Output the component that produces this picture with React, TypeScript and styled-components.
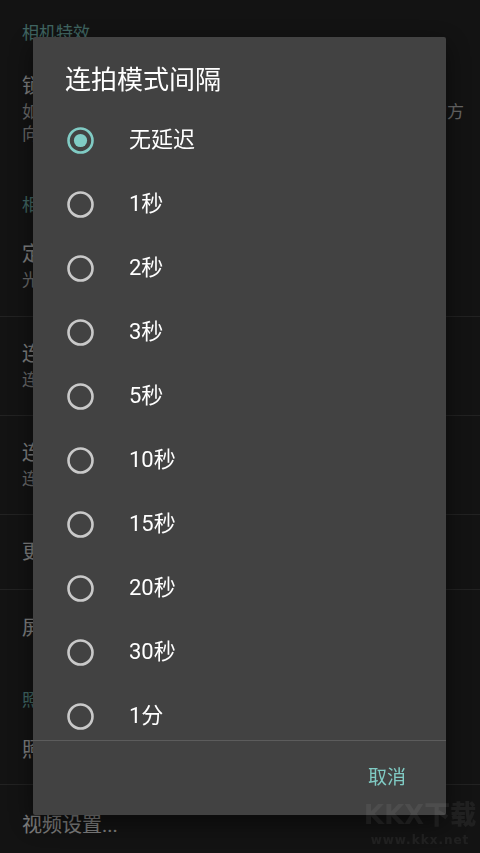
import styled, { createGlobalStyle } from "styled-components";

const GlobalStyle = createGlobalStyle`
  html, body {
    margin: 0;
    padding: 0;
    background: #262626;
  }
  body {
    font-family: Roboto, "Noto Sans CJK SC", sans-serif;
  }
`;

const Page = styled.div`
  position: relative;
  width: 480px;
  height: 853px;
  overflow: hidden;
  background: #262626;
`;

const Category = styled.div<{ $h: number; $top: number }>`
  height: ${(p) => p.$h}px;
  padding: ${(p) => p.$top}px 22px 0;
  box-sizing: border-box;
  font-size: 17px;
  line-height: 22px;
  color: #80cbc4;
`;

const Pref = styled.div<{ $h: number; $divider?: boolean }>`
  height: ${(p) => p.$h}px;
  padding: 0 22px;
  display: flex;
  flex-direction: column;
  justify-content: center;
  border-bottom: ${(p) => (p.$divider ? "1px solid #444444" : "none")};
  box-sizing: content-box;
`;

const PrefTitle = styled.div`
  font-size: 20px;
  line-height: 26px;
  color: #ffffff;
  white-space: nowrap;
`;

const PrefSummary = styled.div<{ $first?: boolean }>`
  margin-top: ${(p) => (p.$first ? 2 : 0)}px;
  font-size: 17px;
  line-height: 22px;
  color: #d0d0d0;
  white-space: nowrap;
`;

const Scrim = styled.div`
  position: fixed;
  inset: 0;
  background: rgba(0, 0, 0, 0.5);
`;

const Dialog = styled.div`
  position: fixed;
  left: 33px;
  top: 37px;
  width: 413px;
  height: 778px;
  background: #424242;
  border-radius: 2px;
  box-shadow: 0 8px 24px rgba(0, 0, 0, 0.5);
  display: flex;
  flex-direction: column;
  overflow: hidden;
`;

const DialogTitle = styled.div`
  height: 71px;
  box-sizing: border-box;
  padding: 25px 32px 0;
  font-size: 26px;
  line-height: 36px;
  color: #ffffff;
`;

const OptionList = styled.div`
  height: 632px;
  overflow: hidden;
`;

const Option = styled.div`
  height: 64px;
  display: flex;
  align-items: center;
  padding-left: 34px;
  gap: 35px;
`;

const OptionLabel = styled.span`
  font-size: 22px;
  line-height: 30px;
  margin-bottom: 1px;
  color: #ffffff;
`;

const Footer = styled.div`
  flex: 1;
  border-top: 1px solid #5c5c5c;
  display: flex;
  justify-content: flex-end;
  align-items: center;
  padding-right: 24px;
`;

const TextButton = styled.button`
  background: none;
  border: none;
  padding: 8px 16px;
  font-family: Roboto, "Noto Sans CJK SC", sans-serif;
  font-size: 19px;
  line-height: 24px;
  color: #80cbc4;
`;

const Watermark = styled.div`
  position: fixed;
  left: 363px;
  top: 798px;
  width: 114px;
  display: flex;
  flex-direction: column;
  align-items: center;
  color: rgba(255, 255, 255, 0.06);
  font-family: "DejaVu Sans", "Noto Sans CJK SC", sans-serif;
  font-weight: bold;
  pointer-events: none;
`;

const WatermarkLogo = styled.div`
  font-size: 26px;
  line-height: 34px;
  font-weight: 900;
`;

const WatermarkUrl = styled.div`
  font-size: 12px;
  line-height: 16px;
  letter-spacing: 1px;
`;

const Radio = ({ checked }: { checked: boolean }) => (
  <svg width="27" height="27" viewBox="0 0 27 27">
    <circle
      cx="13.5"
      cy="13.5"
      r="12"
      fill="none"
      stroke={checked ? "#80cbc4" : "#c9c9c9"}
      strokeWidth="2.6"
    />
    {checked && <circle cx="13.5" cy="13.5" r="6.6" fill="#80cbc4" />}
  </svg>
);

const options = ["无延迟", "1秒", "2秒", "3秒", "5秒", "10秒", "15秒", "20秒", "30秒", "1分"];

export default function App() {
  return (
    <Page>
      <GlobalStyle />
      <Category $h={58} $top={22}>相机特效</Category>
      <Pref $h={102}>
        <PrefTitle>锁定照片/视频方向</PrefTitle>
        <PrefSummary $first>如果启用，则拍摄的照片和视频将始终被锁定为所选择的方</PrefSummary>
        <PrefSummary>向。</PrefSummary>
      </Pref>
      <Category $h={56} $top={34}>相机控制</Category>
      <Pref $h={100} $divider>
        <PrefTitle>定时器</PrefTitle>
        <PrefSummary $first>光圈定时拍照</PrefSummary>
      </Pref>
      <Pref $h={98} $divider>
        <PrefTitle>连拍模式</PrefTitle>
        <PrefSummary $first>连拍模式拍摄的照片数量</PrefSummary>
      </Pref>
      <Pref $h={98} $divider>
        <PrefTitle>连拍模式间隔</PrefTitle>
        <PrefSummary $first>连拍模式下照片之间的延迟</PrefSummary>
      </Pref>
      <Pref $h={74} $divider>
        <PrefTitle>更多相机控制...</PrefTitle>
      </Pref>
      <Pref $h={75}>
        <PrefTitle>屏幕上的界面...</PrefTitle>
      </Pref>
      <Category $h={50} $top={24}>照片和视频</Category>
      <Pref $h={69} $divider>
        <PrefTitle>照片设置...</PrefTitle>
      </Pref>
      <Pref $h={80}>
        <PrefTitle>视频设置...</PrefTitle>
      </Pref>

      <Scrim />
      <Dialog>
        <DialogTitle>连拍模式间隔</DialogTitle>
        <OptionList>
          {options.map((o, i) => (
            <Option key={o}>
              <Radio checked={i === 0} />
              <OptionLabel>{o}</OptionLabel>
            </Option>
          ))}
        </OptionList>
        <Footer>
          <TextButton>取消</TextButton>
        </Footer>
      </Dialog>
      <Watermark>
        <WatermarkLogo>KKX下载</WatermarkLogo>
        <WatermarkUrl>www.kkx.net</WatermarkUrl>
      </Watermark>
    </Page>
  );
}
